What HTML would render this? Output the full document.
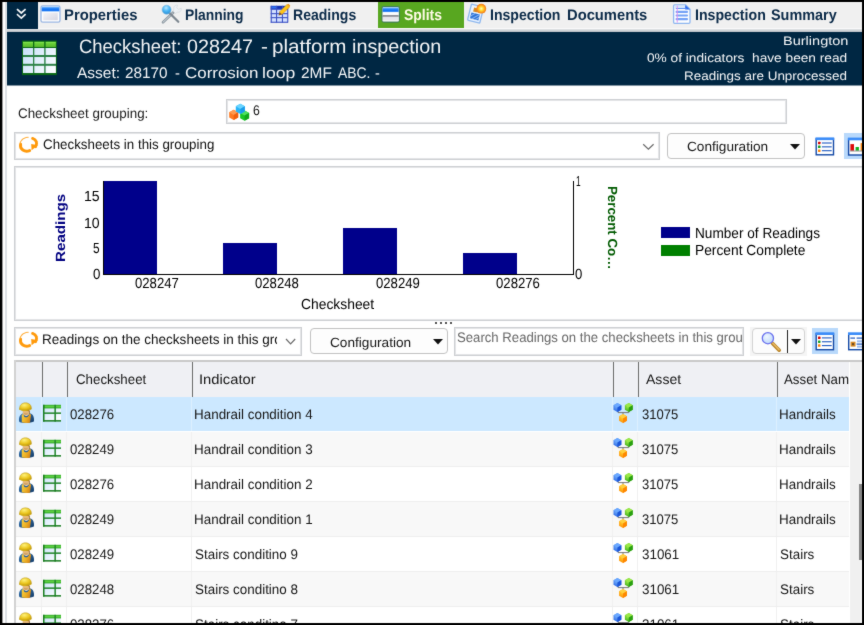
<!DOCTYPE html>
<html lang="en">
<head>
<meta charset="utf-8">
<title>Checksheet 028247 - Splits</title>
<style>
html,body{margin:0;padding:0;}
body{width:864px;height:625px;background:#000;overflow:hidden;position:relative;font-family:"Liberation Sans",sans-serif;filter:url(#soft);}
#app{position:absolute;left:2px;top:2px;width:860px;height:621px;background:#fff;overflow:hidden;}
#in{position:absolute;left:-2px;top:-2px;width:864px;height:625px;}
.b{position:absolute;box-sizing:border-box;}
.t{position:absolute;white-space:pre;line-height:1;transform-origin:0 0;text-rendering:geometricPrecision;}
.clip{position:absolute;overflow:hidden;}
.bx{border:1px solid #cdcfd2;box-shadow:inset 0 0 0 1px #e4e5e7;background:#fff;}
svg{position:absolute;overflow:visible;}
</style>
</head>
<body>
<div id="app"><div id="in">
<svg width="0" height="0" style="left:0;top:0"><defs>
<filter id="soft" x="0" y="0" width="100%" height="100%" color-interpolation-filters="sRGB"><feConvolveMatrix order="3" kernelMatrix="1 4 1 4 40 4 1 4 1" divisor="60" edgeMode="duplicate" preserveAlpha="true"/></filter>
<linearGradient id="gTitle" x1="0" y1="0" x2="0" y2="1"><stop offset="0" stop-color="#8cc6ff"/><stop offset="0.35" stop-color="#2a86f8"/><stop offset="0.75" stop-color="#0a6cf2"/><stop offset="1" stop-color="#7db6fb"/></linearGradient>
<linearGradient id="gPane" x1="0" y1="0" x2="1" y2="1"><stop offset="0" stop-color="#f4f4f8"/><stop offset="1" stop-color="#d6d6e2"/></linearGradient>
<linearGradient id="gCell" x1="0" y1="0" x2="1" y2="1"><stop offset="0" stop-color="#cbe2fa"/><stop offset="1" stop-color="#ffffff"/></linearGradient>
<linearGradient id="gCellBig" gradientUnits="userSpaceOnUse" x1="23" y1="48" x2="56" y2="73"><stop offset="0" stop-color="#c6dff8"/><stop offset="1" stop-color="#ffffff"/></linearGradient>
<linearGradient id="gGreenTop" x1="0" y1="0" x2="0" y2="1"><stop offset="0" stop-color="#8cf05a"/><stop offset="0.3" stop-color="#6ad038"/><stop offset="1" stop-color="#58b82c"/></linearGradient>
<radialGradient id="gBall" cx="0.45" cy="0.3" r="0.7"><stop offset="0" stop-color="#b8e8ff"/><stop offset="0.5" stop-color="#4db8f6"/><stop offset="1" stop-color="#2a8fd6"/></radialGradient>
<radialGradient id="gSun" cx="0.5" cy="0.5" r="0.5"><stop offset="0" stop-color="#fffbd0"/><stop offset="0.35" stop-color="#ffe23a"/><stop offset="0.75" stop-color="#ff9a18"/><stop offset="1" stop-color="#f07818"/></radialGradient>
<linearGradient id="gPencil" x1="0" y1="0" x2="1" y2="1"><stop offset="0" stop-color="#ffe02a"/><stop offset="0.6" stop-color="#ffc010"/><stop offset="1" stop-color="#e88a08"/></linearGradient>
<radialGradient id="gBlueC" cx="0.4" cy="0.35" r="0.7"><stop offset="0" stop-color="#7ab4ff"/><stop offset="1" stop-color="#1e5ee0"/></radialGradient>
<radialGradient id="gGreenC" cx="0.4" cy="0.35" r="0.7"><stop offset="0" stop-color="#a8f050"/><stop offset="1" stop-color="#30a810"/></radialGradient>
<radialGradient id="gOrangeC" cx="0.4" cy="0.35" r="0.7"><stop offset="0" stop-color="#ffd030"/><stop offset="1" stop-color="#ff8a00"/></radialGradient>
<radialGradient id="gHat" cx="0.4" cy="0.3" r="0.8"><stop offset="0" stop-color="#fff27a"/><stop offset="0.6" stop-color="#e8c21a"/><stop offset="1" stop-color="#b89010"/></radialGradient>
<linearGradient id="gShirt" x1="0" y1="0" x2="1" y2="1"><stop offset="0" stop-color="#3a7ab8"/><stop offset="1" stop-color="#123a66"/></linearGradient>
<linearGradient id="gApron" x1="0" y1="0" x2="1" y2="0.4"><stop offset="0" stop-color="#f8d040"/><stop offset="0.55" stop-color="#eeb428"/><stop offset="1" stop-color="#d88a18"/></linearGradient>
<radialGradient id="gLens" cx="0.4" cy="0.35" r="0.7"><stop offset="0" stop-color="#eef6ff"/><stop offset="1" stop-color="#bcd8fb"/></radialGradient>
</defs></svg>
<!-- left window edge -->
<div class="b" style="left:2px;top:2px;width:1px;height:621px;background:#9a9a9a"></div>
<div class="b" style="left:5px;top:2px;width:2px;height:621px;background:#dde0e4"></div>

<!-- tab bar -->
<div class="b" style="left:7px;top:2px;width:855px;height:27px;background:#f0f0f0"></div>
<div class="b" style="left:7px;top:28px;width:855px;height:1px;background:#fafafa"></div>
<div class="b" style="left:7px;top:29px;width:855px;height:3px;background:linear-gradient(#e4e6e8,#b9bec4)"></div>
<div class="b" style="left:7px;top:2px;width:31px;height:27px;background:#002743"></div>
<div class="b" style="left:378px;top:2px;width:86px;height:26px;background:#58a720"></div>
<svg style="left:14px;top:6px" width="18" height="18" viewBox="14 6 18 18" ><path d="M17.6 9.6 L21.3 13.0 L25.0 9.6 M17.6 14.8 L21.3 18.2 L25.0 14.8" fill="none" stroke="#f4f6f8" stroke-width="1.7" stroke-linecap="square"/></svg>
<svg style="left:39px;top:3px" width="24" height="22" viewBox="39 3 24 22" ><rect x="41.0" y="5.8999999999999995" width="19.0" height="16.3" rx="1.8" fill="#fff" stroke="#9ab6e2" stroke-width="1.3"/><rect x="41.699999999999996" y="6.699999999999999" width="17.599999999999998" height="4.9" fill="url(#gTitle)"/><rect x="43.199999999999996" y="12.7" width="14.6" height="7.5" fill="url(#gPane)"/></svg>
<svg style="left:159px;top:3px" width="24" height="22" viewBox="159 3 24 22" ><path d="M163 22.3 L173.5 12.2" stroke="#8f9aa3" stroke-width="2.6" stroke-linecap="round" fill="none"/><path d="M163.2 22.1 L172.5 13.2" stroke="#d6dde2" stroke-width="0.9" stroke-linecap="round" fill="none"/><path d="M168.2 11.8 L178.3 21.8" stroke="#7d8790" stroke-width="2.2" stroke-linecap="round" fill="none"/><path d="M173.8 9.2 C173.2 6.2 175.5 4.6 177.6 5.2 L176.6 7.8 L178.6 9.4 L181.2 8.2 C181.8 10.8 179.8 12.8 177.2 12.2 L175.6 13.4 L173 11.2 Z" fill="#eef1f4" stroke="#cfd5da" stroke-width="0.6"/><circle cx="166.6" cy="9.7" r="4.5" fill="url(#gBall)" stroke="#7fb6dc" stroke-width="0.6"/></svg>
<svg style="left:268px;top:2px" width="24" height="24" viewBox="268 2 24 24" ><rect x="270.7" y="5.8" width="17.3" height="16.8" fill="#d3e0ff"/><rect x="270.7" y="5.8" width="17.3" height="3.4" fill="#1432b4"/><rect x="271.2" y="6.4" width="6" height="2.2" fill="#2f74f2"/><rect x="270.7" y="5.8" width="1.1" height="16.8" fill="#3c52c4"/><rect x="276.0" y="5.8" width="1.1" height="16.8" fill="#3c52c4"/><rect x="281.9" y="5.8" width="1.1" height="16.8" fill="#3c52c4"/><rect x="287.2" y="5.8" width="1.1" height="16.8" fill="#3c52c4"/><rect x="270.7" y="8.7" width="17.3" height="1.1" fill="#3c52c4"/><rect x="270.7" y="13.1" width="17.3" height="1.1" fill="#3c52c4"/><rect x="270.7" y="17.1" width="17.3" height="1.1" fill="#3c52c4"/><rect x="270.7" y="21.7" width="17.3" height="1.1" fill="#3c52c4"/><path d="M287.0 4.4 L289.6 7.0 L282.0 14.6 L279.4 12.0 Z" fill="url(#gPencil)" stroke="#c98a18" stroke-width="0.5"/><path d="M279.4 12.0 L282.0 14.6 L278.6 15.4 Z" fill="#8a5a20"/><path d="M287.0 4.4 L289.6 7.0 L290.2 5.6 L288.4 3.8 Z" fill="#f09818"/></svg>
<svg style="left:380px;top:4px" width="22" height="21" viewBox="380 4 22 21" ><rect x="382.0" y="6.6" width="17.3" height="15.400000000000002" rx="1.8" fill="#fff" stroke="#3f7d55" stroke-width="1.3"/><rect x="382.7" y="7.4" width="15.9" height="4.9" fill="url(#gTitle)"/><rect x="382.7" y="12.3" width="15.9" height="3.0" fill="#fbfbfd"/><rect x="382.7" y="15.0" width="15.9" height="1.9" fill="#8e8e98"/><rect x="382.7" y="16.9" width="15.9" height="4.300000000000001" fill="#e4e4ec"/><rect x="382.7" y="20.3" width="15.9" height="1" fill="#fafafc"/></svg>
<svg style="left:465px;top:2px" width="24" height="24" viewBox="465 2 24 24" ><g transform="rotate(14 475 14)"><rect x="469.2" y="5.2" width="12.6" height="16.6" rx="1" fill="#eaf3ff" stroke="#8fb8ee" stroke-width="1.3"/><rect x="471.2" y="13.4" width="8.6" height="6.0" fill="#2f74d8"/><path d="M471.2 17 L475 13.4 M473.2 19.4 L479.4 13.6 M476.6 19.4 L479.8 16.4" stroke="#8fb8f2" stroke-width="1"/><rect x="472.6" y="8.0" width="4.6" height="4.0" fill="#d98a20"/></g><circle cx="481.3" cy="8.7" r="4.9" fill="url(#gSun)"/></svg>
<svg style="left:671px;top:3px" width="22" height="22" viewBox="671 3 22 22" ><path d="M674.6 4.9 H685.6 L690 9.2 V22.2 Q690 23.3 688.9 23.3 H674.6 Q673.6 23.3 673.6 22.2 V5.9 Q673.6 4.9 674.6 4.9 Z" fill="#fdfeff" stroke="#8db6f0" stroke-width="1.3"/><rect x="674.6" y="5.6" width="11" height="2.6" fill="#d6e8fc"/><path d="M685.2 4.9 L690 9.4 H685.2 Z" fill="#2a68f0"/><rect x="675.8" y="8.1" width="11" height="0.9" fill="#4f86f2"/><rect x="675.6" y="10.8" width="12.4" height="2.1" rx="0.9" fill="#74a2f6"/><rect x="675.6" y="14.4" width="12.4" height="2.1" rx="0.9" fill="#74a2f6"/><rect x="675.6" y="18.1" width="12.4" height="2.1" rx="0.9" fill="#74a2f6"/><rect x="676.7" y="5.6" width="1.1" height="17" fill="#e58cf0" opacity="0.85"/></svg>

<!-- header band -->
<div class="b" style="left:7px;top:32px;width:855px;height:53px;background:#002743"></div>
<div class="b" style="left:7px;top:85px;width:855px;height:1px;background:#7f92a0"></div>
<svg style="left:21px;top:40px" width="37" height="36" viewBox="21 40 37 36" ><rect x="22" y="40.6" width="34.8" height="34.5" fill="#0b6a14"/><rect x="23.0" y="41.8" width="10.0" height="5.2" fill="url(#gGreenTop)"/><rect x="34.3" y="41.8" width="9.900000000000006" height="5.2" fill="url(#gGreenTop)"/><rect x="45.6" y="41.8" width="10.299999999999997" height="5.2" fill="url(#gGreenTop)"/><rect x="23" y="48" width="33" height="25.2" fill="#2c8246"/><rect x="23.0" y="48.0" width="10.0" height="7.0" fill="url(#gCellBig)"/><rect x="23.0" y="57.0" width="10.0" height="6.799999999999997" fill="url(#gCellBig)"/><rect x="23.0" y="65.8" width="10.0" height="7.200000000000003" fill="url(#gCellBig)"/><rect x="34.3" y="48.0" width="9.900000000000006" height="7.0" fill="url(#gCellBig)"/><rect x="34.3" y="57.0" width="9.900000000000006" height="6.799999999999997" fill="url(#gCellBig)"/><rect x="34.3" y="65.8" width="9.900000000000006" height="7.200000000000003" fill="url(#gCellBig)"/><rect x="45.6" y="48.0" width="10.299999999999997" height="7.0" fill="url(#gCellBig)"/><rect x="45.6" y="57.0" width="10.299999999999997" height="6.799999999999997" fill="url(#gCellBig)"/><rect x="45.6" y="65.8" width="10.299999999999997" height="7.200000000000003" fill="url(#gCellBig)"/></svg>

<!-- grouping row -->
<div class="b bx" style="left:226px;top:99px;width:561px;height:25px"></div>
<svg style="left:227px;top:102px" width="25" height="21" viewBox="227 102 25 21" ><path d="M233.70 109.70 L238.20 112.30 L238.20 117.50 L233.70 120.10 L229.20 117.50 L229.20 112.30 Z" fill="#ff7a22"/><path d="M233.70 109.70 L238.20 112.30 L233.70 114.90 L229.20 112.30 Z" fill="#ff9a50"/><path d="M238.20 112.30 L238.20 117.50 L233.70 120.10 L233.70 114.90 Z" fill="#f0600e"/><path d="M244.60 110.40 L249.10 113.00 L249.10 118.20 L244.60 120.80 L240.10 118.20 L240.10 113.00 Z" fill="#18c828"/><path d="M244.60 110.40 L249.10 113.00 L244.60 115.60 L240.10 113.00 Z" fill="#4ee060"/><path d="M249.10 113.00 L249.10 118.20 L244.60 120.80 L244.60 115.60 Z" fill="#10a81c"/><path d="M240.30 103.70 L244.80 106.30 L244.80 111.50 L240.30 114.10 L235.80 111.50 L235.80 106.30 Z" fill="#28b4f8"/><path d="M240.30 103.70 L244.80 106.30 L240.30 108.90 L235.80 106.30 Z" fill="#6ad4ff"/><path d="M244.80 106.30 L244.80 111.50 L240.30 114.10 L240.30 108.90 Z" fill="#1a9cea"/></svg>

<!-- toolbar 1 -->
<div class="b bx" style="left:14px;top:132px;width:646px;height:28px"></div>
<svg style="left:17px;top:135px" width="23" height="20" viewBox="17 135 23 20" ><g transform="translate(0 0)"><path d="M20.6 144.2 C19.6 149.2 24.6 152.6 29.6 150.6" fill="none" stroke="#ff9a0c" stroke-width="2.9" stroke-linecap="round"/><path d="M20.2 143.0 C21.0 139.6 24.4 137.2 28.8 137.2" fill="none" stroke="#ffb040" stroke-width="1.1" stroke-linecap="round" stroke-dasharray="2.2 0.6"/><path d="M32.6 138.4 C36.6 139.6 37.6 143.6 35.6 146.6" fill="none" stroke="#ff9a0c" stroke-width="2.9" stroke-linecap="round"/><path d="M31.2 144.0 L38.0 145.2 L31.6 150.2 Z" fill="#ff9a0c"/></g></svg>
<svg style="left:642px;top:143px" width="13" height="8" viewBox="0 0 13 8"><path d="M1.2 1.2 L6.4 6.2 L11.6 1.2" fill="none" stroke="#6a6a6a" stroke-width="1.2"/></svg>
<div class="b" style="left:667px;top:133px;width:138px;height:26px;border:1px solid #c2c2c2;border-radius:4px;background:#fdfdfd"></div>
<svg style="left:790px;top:144px" width="10" height="6" viewBox="0 0 10 6"><path d="M0 0 H10 L5 5.5 Z" fill="#111"/></svg>
<div class="b" style="left:844px;top:133px;width:18px;height:26px;background:#b9d9fb"></div>
<svg style="left:815px;top:137px" width="20" height="19" viewBox="815 137 20 19" ><rect x="816.2" y="138.8" width="17.3" height="16.0" fill="#fff" stroke="#1349a6" stroke-width="1.4"/><rect x="815.5" y="137.4" width="18.7" height="2.7" fill="#3b8cf8"/><rect x="818.0" y="141.70000000000002" width="2.5" height="2.5" rx="0.6" fill="#d40000"/><rect x="821.9" y="142.45000000000002" width="9.8" height="1.1" fill="#1c58c0"/><rect x="818.0" y="145.55" width="2.5" height="2.5" rx="0.6" fill="#12a022"/><rect x="821.9" y="146.3" width="9.8" height="1.1" fill="#1c58c0"/><rect x="818.0" y="149.4" width="2.5" height="2.5" rx="0.6" fill="#ff8200"/><rect x="821.9" y="150.15" width="9.8" height="1.1" fill="#1c58c0"/></svg>
<svg style="left:847px;top:137px" width="15" height="19" viewBox="847 137 15 19"><rect x="848.6" y="139.0" width="17.3" height="16.0" fill="#fff" stroke="#1349a6" stroke-width="1.4"/><rect x="847.9" y="137.6" width="18.7" height="2.7" fill="#3b8cf8"/><rect x="850.4" y="144.1" width="3.6" height="6.6" fill="#dc0a0a"/><rect x="855.6" y="147.0" width="3.3" height="3.7" fill="#12b022"/><rect x="860.6" y="143.1" width="3.4" height="7.6" fill="#ff8a10"/><rect x="850.1" y="150.6" width="14" height="0.8" fill="#777"/></svg>

<!-- chart panel -->
<div class="b bx" style="left:14px;top:166px;width:860px;height:155px"></div>
<div class="b" style="left:103px;top:181px;width:54px;height:93px;background:#00008b"></div>
<div class="b" style="left:223px;top:243px;width:54px;height:31px;background:#00008b"></div>
<div class="b" style="left:343px;top:228px;width:54px;height:46px;background:#00008b"></div>
<div class="b" style="left:463px;top:253px;width:54px;height:21px;background:#00008b"></div>
<div class="b" style="left:103px;top:274px;width:471px;height:1px;background:#000"></div>
<div class="b" style="left:103px;top:181px;width:1px;height:94px;background:#000"></div>
<div class="b" style="left:573px;top:181px;width:1px;height:94px;background:#000"></div>
<div class="b" style="left:661px;top:227px;width:29px;height:11px;background:#00008b"></div>
<div class="b" style="left:661px;top:245px;width:29px;height:11px;background:#008000"></div>
<div class="t" style="left:54.2px;top:261.6px;font-size:13.3px;font-weight:700;color:#000080;transform:rotate(-90deg) scaleX(1.14);transform-origin:0 0;">Readings</div>
<div class="t" style="left:619px;top:185.6px;font-size:13.3px;font-weight:700;color:#005a00;transform:rotate(90deg) scaleX(1.0);transform-origin:0 0;">Percent Co…</div>

<!-- splitter dots -->
<div class="b" style="left:434.5px;top:322px;width:2px;height:2px;background:#555"></div>
<div class="b" style="left:439.5px;top:322px;width:2px;height:2px;background:#555"></div>
<div class="b" style="left:444.5px;top:322px;width:2px;height:2px;background:#555"></div>
<div class="b" style="left:449.5px;top:322px;width:2px;height:2px;background:#555"></div>

<!-- toolbar 2 -->
<div class="b bx" style="left:14px;top:327px;width:288px;height:29px"></div>
<svg style="left:17px;top:330px" width="23" height="20" viewBox="17 330 23 20"><g transform="translate(0 195)"><path d="M20.6 144.2 C19.6 149.2 24.6 152.6 29.6 150.6" fill="none" stroke="#ff9a0c" stroke-width="2.9" stroke-linecap="round"/><path d="M20.2 143.0 C21.0 139.6 24.4 137.2 28.8 137.2" fill="none" stroke="#ffb040" stroke-width="1.1" stroke-linecap="round" stroke-dasharray="2.2 0.6"/><path d="M32.6 138.4 C36.6 139.6 37.6 143.6 35.6 146.6" fill="none" stroke="#ff9a0c" stroke-width="2.9" stroke-linecap="round"/><path d="M31.2 144.0 L38.0 145.2 L31.6 150.2 Z" fill="#ff9a0c"/></g></svg>
<svg style="left:285px;top:338px" width="12" height="8" viewBox="0 0 12 8"><path d="M1 1 L5.6 5.8 L10.2 1" fill="none" stroke="#6a6a6a" stroke-width="1.2"/></svg>
<div class="b" style="left:310px;top:328px;width:138px;height:26px;border:1px solid #c2c2c2;border-radius:4px;background:#fdfdfd"></div>
<svg style="left:432.5px;top:339px" width="10" height="6" viewBox="0 0 10 6"><path d="M0 0 H10 L5 5.5 Z" fill="#111"/></svg>
<div class="b bx" style="left:454px;top:327px;width:290px;height:29px"></div>
<div class="b" style="left:750px;top:327px;width:57px;height:29px;background:#f5f5f5"></div>
<div class="b" style="left:752px;top:328px;width:53px;height:26px;border:1px solid #d2d2d2;border-radius:4px;background:#fcfcfc"></div>
<div class="b" style="left:786.5px;top:330px;width:1px;height:23px;background:#222"></div>
<svg style="left:791px;top:339px" width="10" height="6" viewBox="0 0 10 6"><path d="M0 0 H10 L5 5.5 Z" fill="#111"/></svg>
<div class="b" style="left:812px;top:328px;width:26px;height:26px;background:#b9d9fb"></div>
<svg style="left:760px;top:331px" width="22" height="22" viewBox="760 331 22 22" ><path d="M772.6 343.4 L779.2 350.2" stroke="#b8842a" stroke-width="3.6" stroke-linecap="round"/><path d="M772.8 343.2 L779.0 349.6" stroke="#e8b860" stroke-width="1.6" stroke-linecap="round"/><circle cx="767.9" cy="338.2" r="5.6" fill="url(#gLens)" stroke="#6a70ee" stroke-width="1.3"/></svg>
<svg style="left:815px;top:332px" width="20" height="19" viewBox="815 332 20 19" ><rect x="816.2" y="333.7" width="17.3" height="16.0" fill="#fff" stroke="#1349a6" stroke-width="1.4"/><rect x="815.5" y="332.3" width="18.7" height="2.7" fill="#3b8cf8"/><rect x="818.0" y="336.6" width="2.5" height="2.5" rx="0.6" fill="#d40000"/><rect x="821.9" y="337.35" width="9.8" height="1.1" fill="#1c58c0"/><rect x="818.0" y="340.45000000000005" width="2.5" height="2.5" rx="0.6" fill="#12a022"/><rect x="821.9" y="341.20000000000005" width="9.8" height="1.1" fill="#1c58c0"/><rect x="818.0" y="344.3" width="2.5" height="2.5" rx="0.6" fill="#ff8200"/><rect x="821.9" y="345.05" width="9.8" height="1.1" fill="#1c58c0"/></svg>
<svg style="left:847px;top:332px" width="15" height="19" viewBox="847 332 15 19"><rect x="848.7" y="333.7" width="17.3" height="16.0" fill="#fff" stroke="#1349a6" stroke-width="1.4"/><rect x="848" y="332.3" width="18.7" height="2.7" fill="#3b8cf8"/><rect x="850.4" y="337.5" width="4.6" height="1.2" fill="#1c58c0"/><rect x="856.6" y="337.5" width="8" height="1.2" fill="#1c58c0"/><rect x="850.6" y="341.7" width="4.9" height="4.9" fill="#d98a20"/><rect x="852" y="343.1" width="2.1" height="2.1" fill="#6a4a2a"/><rect x="857" y="340.3" width="5" height="2" fill="#9dbcf0"/><rect x="856.6" y="343.5" width="8" height="1.2" fill="#1c58c0"/><rect x="857" y="345.7" width="6" height="2" fill="#9dbcf0"/></svg>

<!-- grid -->
<div class="b" style="left:14px;top:360px;width:848px;height:263px;background:#fff"></div>
<div class="b" style="left:14px;top:360px;width:848px;height:2px;background:#c9c9c9"></div>
<div class="b" style="left:14px;top:360px;width:2px;height:263px;background:#d2d2d2"></div>
<div class="b" style="left:16px;top:362px;width:833px;height:35px;background:#eff0f4"></div>
<div class="b" style="left:42px;top:362px;width:1px;height:35px;background:#6b6b6b"></div>
<div class="b" style="left:67px;top:362px;width:1px;height:35px;background:#6b6b6b"></div>
<div class="b" style="left:192px;top:362px;width:1px;height:35px;background:#6b6b6b"></div>
<div class="b" style="left:613px;top:362px;width:1px;height:35px;background:#6b6b6b"></div>
<div class="b" style="left:638px;top:362px;width:1px;height:35px;background:#6b6b6b"></div>
<div class="b" style="left:777px;top:362px;width:1px;height:35px;background:#6b6b6b"></div>
<div class="b" style="left:16px;top:397px;width:833px;height:34px;background:#cce8ff"></div>
<div class="b" style="left:41px;top:397px;width:1px;height:34px;background:#dcefff"></div>
<div class="b" style="left:66px;top:397px;width:1px;height:34px;background:#dcefff"></div>
<div class="b" style="left:191px;top:397px;width:1px;height:34px;background:#dcefff"></div>
<div class="b" style="left:612px;top:397px;width:1px;height:34px;background:#dcefff"></div>
<div class="b" style="left:637px;top:397px;width:1px;height:34px;background:#dcefff"></div>
<div class="b" style="left:776px;top:397px;width:1px;height:34px;background:#dcefff"></div>
<svg style="left:17px;top:402px" width="19" height="22" viewBox="17 402 19 22"><g transform="translate(0 0)"><path d="M19.0 420.4 C18.6 416.2 20.8 413.8 23.6 413.2 L30.0 413.2 C33.0 414.0 34.4 417.0 33.9 421.6 C31 423.3 23 423.5 19.4 421.9 Z" fill="url(#gShirt)"/><path d="M21.7 415.0 L23.5 413.6 L24.0 416.4 C25.4 417.8 27.6 417.6 28.6 415.8 L29.5 413.5 L31.1 414.7 L29.9 422.7 C27 423.4 24 423.2 21.8 422.3 Z" fill="url(#gApron)"/><path d="M24.0 414.0 C25 416.6 27.8 416.6 28.8 413.8 L27.6 413.2 L25 413.2 Z" fill="#eef2f6"/><ellipse cx="26.0" cy="412.0" rx="3.4" ry="3.5" fill="#e6b878"/><path d="M28.4 409.6 C30.2 410.4 30.2 413.2 29.0 414.6 C29.4 412.8 29.0 411.2 28.0 410.2 Z" fill="#8a5a22"/><path d="M22.6 410.2 C23.6 411.4 28.4 411.4 29.6 410.0 L29.6 409 L22.6 409 Z" fill="#9a6a2a"/><path d="M24.4 413.6 C25.2 414.2 26.6 414.2 27.4 413.6" stroke="#a8703a" stroke-width="0.6" fill="none"/><path d="M19.6 409.4 C19.2 405.0 22.0 402.8 25.4 402.8 C29.0 402.8 31.6 405.0 31.4 408.8 C28.4 410.8 22.8 411.0 19.6 409.4 Z" fill="url(#gHat)" stroke="#a8860e" stroke-width="0.4"/><path d="M19.0 409.2 C21.6 411.4 27.4 411.6 31.4 409.6 L31.6 408.4 C27.6 410.2 22.2 410.0 19.2 408.2 Z" fill="#d4b018"/></g></svg><svg style="left:42px;top:404px" width="20" height="19" viewBox="42 404 20 19"><g transform="translate(0 0)"><rect x="43.6" y="405.4" width="17.4" height="15.6" fill="url(#gCell)"/><rect x="43" y="404.8" width="18" height="3.6" fill="#2fa82a"/><rect x="44.4" y="405.6" width="16.6" height="1.8" fill="#5ed040"/><rect x="43" y="404.8" width="1.5" height="16.8" fill="#187c1e"/><rect x="54.4" y="404.8" width="1.5" height="16.8" fill="#1f8428"/><rect x="43" y="412.4" width="18" height="1.5" fill="#1f8428"/><rect x="43" y="420.1" width="18" height="1.5" fill="#187c1e"/></g></svg><svg style="left:612px;top:402px" width="23" height="22" viewBox="612 402 23 22"><g transform="translate(0 0)"><path d="M618 411 V412.6 H628.8 V411 M623 412.6 V415" fill="none" stroke="#6a6a6a" stroke-width="0.9"/><path d="M617.40 402.90 L621.30 405.15 L621.30 409.65 L617.40 411.90 L613.50 409.65 L613.50 405.15 Z" fill="url(#gBlueC)"/><path d="M617.40 402.90 L621.30 405.15 L617.40 407.40 L613.50 405.15 Z" fill="#6aa8ff"/><path d="M621.30 405.15 L621.30 409.65 L617.40 411.90 L617.40 407.40 Z" fill="#1a56d8"/><path d="M628.80 402.90 L632.70 405.15 L632.70 409.65 L628.80 411.90 L624.90 409.65 L624.90 405.15 Z" fill="url(#gGreenC)"/><path d="M628.80 402.90 L632.70 405.15 L628.80 407.40 L624.90 405.15 Z" fill="#9ae848"/><path d="M632.70 405.15 L632.70 409.65 L628.80 411.90 L628.80 407.40 Z" fill="#2aa010"/><path d="M623.00 413.90 L626.90 416.15 L626.90 420.65 L623.00 422.90 L619.10 420.65 L619.10 416.15 Z" fill="url(#gOrangeC)"/><path d="M623.00 413.90 L626.90 416.15 L623.00 418.40 L619.10 416.15 Z" fill="#ffd040"/><path d="M626.90 416.15 L626.90 420.65 L623.00 422.90 L623.00 418.40 Z" fill="#ff8800"/></g></svg>
<div class="b" style="left:16px;top:432px;width:833px;height:34px;background:#f8f8f8"></div>
<div class="b" style="left:16px;top:466px;width:833px;height:1px;background:#eeeeee"></div>
<div class="b" style="left:41px;top:432px;width:1px;height:34px;background:#f0f0f0"></div>
<div class="b" style="left:66px;top:432px;width:1px;height:34px;background:#f0f0f0"></div>
<div class="b" style="left:191px;top:432px;width:1px;height:34px;background:#f0f0f0"></div>
<div class="b" style="left:612px;top:432px;width:1px;height:34px;background:#f0f0f0"></div>
<div class="b" style="left:637px;top:432px;width:1px;height:34px;background:#f0f0f0"></div>
<div class="b" style="left:776px;top:432px;width:1px;height:34px;background:#f0f0f0"></div>
<svg style="left:17px;top:437px" width="19" height="22" viewBox="17 437 19 22"><g transform="translate(0 35)"><path d="M19.0 420.4 C18.6 416.2 20.8 413.8 23.6 413.2 L30.0 413.2 C33.0 414.0 34.4 417.0 33.9 421.6 C31 423.3 23 423.5 19.4 421.9 Z" fill="url(#gShirt)"/><path d="M21.7 415.0 L23.5 413.6 L24.0 416.4 C25.4 417.8 27.6 417.6 28.6 415.8 L29.5 413.5 L31.1 414.7 L29.9 422.7 C27 423.4 24 423.2 21.8 422.3 Z" fill="url(#gApron)"/><path d="M24.0 414.0 C25 416.6 27.8 416.6 28.8 413.8 L27.6 413.2 L25 413.2 Z" fill="#eef2f6"/><ellipse cx="26.0" cy="412.0" rx="3.4" ry="3.5" fill="#e6b878"/><path d="M28.4 409.6 C30.2 410.4 30.2 413.2 29.0 414.6 C29.4 412.8 29.0 411.2 28.0 410.2 Z" fill="#8a5a22"/><path d="M22.6 410.2 C23.6 411.4 28.4 411.4 29.6 410.0 L29.6 409 L22.6 409 Z" fill="#9a6a2a"/><path d="M24.4 413.6 C25.2 414.2 26.6 414.2 27.4 413.6" stroke="#a8703a" stroke-width="0.6" fill="none"/><path d="M19.6 409.4 C19.2 405.0 22.0 402.8 25.4 402.8 C29.0 402.8 31.6 405.0 31.4 408.8 C28.4 410.8 22.8 411.0 19.6 409.4 Z" fill="url(#gHat)" stroke="#a8860e" stroke-width="0.4"/><path d="M19.0 409.2 C21.6 411.4 27.4 411.6 31.4 409.6 L31.6 408.4 C27.6 410.2 22.2 410.0 19.2 408.2 Z" fill="#d4b018"/></g></svg><svg style="left:42px;top:439px" width="20" height="19" viewBox="42 439 20 19"><g transform="translate(0 35)"><rect x="43.6" y="405.4" width="17.4" height="15.6" fill="url(#gCell)"/><rect x="43" y="404.8" width="18" height="3.6" fill="#2fa82a"/><rect x="44.4" y="405.6" width="16.6" height="1.8" fill="#5ed040"/><rect x="43" y="404.8" width="1.5" height="16.8" fill="#187c1e"/><rect x="54.4" y="404.8" width="1.5" height="16.8" fill="#1f8428"/><rect x="43" y="412.4" width="18" height="1.5" fill="#1f8428"/><rect x="43" y="420.1" width="18" height="1.5" fill="#187c1e"/></g></svg><svg style="left:612px;top:437px" width="23" height="22" viewBox="612 437 23 22"><g transform="translate(0 35)"><path d="M618 411 V412.6 H628.8 V411 M623 412.6 V415" fill="none" stroke="#6a6a6a" stroke-width="0.9"/><path d="M617.40 402.90 L621.30 405.15 L621.30 409.65 L617.40 411.90 L613.50 409.65 L613.50 405.15 Z" fill="url(#gBlueC)"/><path d="M617.40 402.90 L621.30 405.15 L617.40 407.40 L613.50 405.15 Z" fill="#6aa8ff"/><path d="M621.30 405.15 L621.30 409.65 L617.40 411.90 L617.40 407.40 Z" fill="#1a56d8"/><path d="M628.80 402.90 L632.70 405.15 L632.70 409.65 L628.80 411.90 L624.90 409.65 L624.90 405.15 Z" fill="url(#gGreenC)"/><path d="M628.80 402.90 L632.70 405.15 L628.80 407.40 L624.90 405.15 Z" fill="#9ae848"/><path d="M632.70 405.15 L632.70 409.65 L628.80 411.90 L628.80 407.40 Z" fill="#2aa010"/><path d="M623.00 413.90 L626.90 416.15 L626.90 420.65 L623.00 422.90 L619.10 420.65 L619.10 416.15 Z" fill="url(#gOrangeC)"/><path d="M623.00 413.90 L626.90 416.15 L623.00 418.40 L619.10 416.15 Z" fill="#ffd040"/><path d="M626.90 416.15 L626.90 420.65 L623.00 422.90 L623.00 418.40 Z" fill="#ff8800"/></g></svg>
<div class="b" style="left:16px;top:467px;width:833px;height:34px;background:#ffffff"></div>
<div class="b" style="left:16px;top:501px;width:833px;height:1px;background:#eeeeee"></div>
<div class="b" style="left:41px;top:467px;width:1px;height:34px;background:#f0f0f0"></div>
<div class="b" style="left:66px;top:467px;width:1px;height:34px;background:#f0f0f0"></div>
<div class="b" style="left:191px;top:467px;width:1px;height:34px;background:#f0f0f0"></div>
<div class="b" style="left:612px;top:467px;width:1px;height:34px;background:#f0f0f0"></div>
<div class="b" style="left:637px;top:467px;width:1px;height:34px;background:#f0f0f0"></div>
<div class="b" style="left:776px;top:467px;width:1px;height:34px;background:#f0f0f0"></div>
<svg style="left:17px;top:472px" width="19" height="22" viewBox="17 472 19 22"><g transform="translate(0 70)"><path d="M19.0 420.4 C18.6 416.2 20.8 413.8 23.6 413.2 L30.0 413.2 C33.0 414.0 34.4 417.0 33.9 421.6 C31 423.3 23 423.5 19.4 421.9 Z" fill="url(#gShirt)"/><path d="M21.7 415.0 L23.5 413.6 L24.0 416.4 C25.4 417.8 27.6 417.6 28.6 415.8 L29.5 413.5 L31.1 414.7 L29.9 422.7 C27 423.4 24 423.2 21.8 422.3 Z" fill="url(#gApron)"/><path d="M24.0 414.0 C25 416.6 27.8 416.6 28.8 413.8 L27.6 413.2 L25 413.2 Z" fill="#eef2f6"/><ellipse cx="26.0" cy="412.0" rx="3.4" ry="3.5" fill="#e6b878"/><path d="M28.4 409.6 C30.2 410.4 30.2 413.2 29.0 414.6 C29.4 412.8 29.0 411.2 28.0 410.2 Z" fill="#8a5a22"/><path d="M22.6 410.2 C23.6 411.4 28.4 411.4 29.6 410.0 L29.6 409 L22.6 409 Z" fill="#9a6a2a"/><path d="M24.4 413.6 C25.2 414.2 26.6 414.2 27.4 413.6" stroke="#a8703a" stroke-width="0.6" fill="none"/><path d="M19.6 409.4 C19.2 405.0 22.0 402.8 25.4 402.8 C29.0 402.8 31.6 405.0 31.4 408.8 C28.4 410.8 22.8 411.0 19.6 409.4 Z" fill="url(#gHat)" stroke="#a8860e" stroke-width="0.4"/><path d="M19.0 409.2 C21.6 411.4 27.4 411.6 31.4 409.6 L31.6 408.4 C27.6 410.2 22.2 410.0 19.2 408.2 Z" fill="#d4b018"/></g></svg><svg style="left:42px;top:474px" width="20" height="19" viewBox="42 474 20 19"><g transform="translate(0 70)"><rect x="43.6" y="405.4" width="17.4" height="15.6" fill="url(#gCell)"/><rect x="43" y="404.8" width="18" height="3.6" fill="#2fa82a"/><rect x="44.4" y="405.6" width="16.6" height="1.8" fill="#5ed040"/><rect x="43" y="404.8" width="1.5" height="16.8" fill="#187c1e"/><rect x="54.4" y="404.8" width="1.5" height="16.8" fill="#1f8428"/><rect x="43" y="412.4" width="18" height="1.5" fill="#1f8428"/><rect x="43" y="420.1" width="18" height="1.5" fill="#187c1e"/></g></svg><svg style="left:612px;top:472px" width="23" height="22" viewBox="612 472 23 22"><g transform="translate(0 70)"><path d="M618 411 V412.6 H628.8 V411 M623 412.6 V415" fill="none" stroke="#6a6a6a" stroke-width="0.9"/><path d="M617.40 402.90 L621.30 405.15 L621.30 409.65 L617.40 411.90 L613.50 409.65 L613.50 405.15 Z" fill="url(#gBlueC)"/><path d="M617.40 402.90 L621.30 405.15 L617.40 407.40 L613.50 405.15 Z" fill="#6aa8ff"/><path d="M621.30 405.15 L621.30 409.65 L617.40 411.90 L617.40 407.40 Z" fill="#1a56d8"/><path d="M628.80 402.90 L632.70 405.15 L632.70 409.65 L628.80 411.90 L624.90 409.65 L624.90 405.15 Z" fill="url(#gGreenC)"/><path d="M628.80 402.90 L632.70 405.15 L628.80 407.40 L624.90 405.15 Z" fill="#9ae848"/><path d="M632.70 405.15 L632.70 409.65 L628.80 411.90 L628.80 407.40 Z" fill="#2aa010"/><path d="M623.00 413.90 L626.90 416.15 L626.90 420.65 L623.00 422.90 L619.10 420.65 L619.10 416.15 Z" fill="url(#gOrangeC)"/><path d="M623.00 413.90 L626.90 416.15 L623.00 418.40 L619.10 416.15 Z" fill="#ffd040"/><path d="M626.90 416.15 L626.90 420.65 L623.00 422.90 L623.00 418.40 Z" fill="#ff8800"/></g></svg>
<div class="b" style="left:16px;top:502px;width:833px;height:34px;background:#f8f8f8"></div>
<div class="b" style="left:16px;top:536px;width:833px;height:1px;background:#eeeeee"></div>
<div class="b" style="left:41px;top:502px;width:1px;height:34px;background:#f0f0f0"></div>
<div class="b" style="left:66px;top:502px;width:1px;height:34px;background:#f0f0f0"></div>
<div class="b" style="left:191px;top:502px;width:1px;height:34px;background:#f0f0f0"></div>
<div class="b" style="left:612px;top:502px;width:1px;height:34px;background:#f0f0f0"></div>
<div class="b" style="left:637px;top:502px;width:1px;height:34px;background:#f0f0f0"></div>
<div class="b" style="left:776px;top:502px;width:1px;height:34px;background:#f0f0f0"></div>
<svg style="left:17px;top:507px" width="19" height="22" viewBox="17 507 19 22"><g transform="translate(0 105)"><path d="M19.0 420.4 C18.6 416.2 20.8 413.8 23.6 413.2 L30.0 413.2 C33.0 414.0 34.4 417.0 33.9 421.6 C31 423.3 23 423.5 19.4 421.9 Z" fill="url(#gShirt)"/><path d="M21.7 415.0 L23.5 413.6 L24.0 416.4 C25.4 417.8 27.6 417.6 28.6 415.8 L29.5 413.5 L31.1 414.7 L29.9 422.7 C27 423.4 24 423.2 21.8 422.3 Z" fill="url(#gApron)"/><path d="M24.0 414.0 C25 416.6 27.8 416.6 28.8 413.8 L27.6 413.2 L25 413.2 Z" fill="#eef2f6"/><ellipse cx="26.0" cy="412.0" rx="3.4" ry="3.5" fill="#e6b878"/><path d="M28.4 409.6 C30.2 410.4 30.2 413.2 29.0 414.6 C29.4 412.8 29.0 411.2 28.0 410.2 Z" fill="#8a5a22"/><path d="M22.6 410.2 C23.6 411.4 28.4 411.4 29.6 410.0 L29.6 409 L22.6 409 Z" fill="#9a6a2a"/><path d="M24.4 413.6 C25.2 414.2 26.6 414.2 27.4 413.6" stroke="#a8703a" stroke-width="0.6" fill="none"/><path d="M19.6 409.4 C19.2 405.0 22.0 402.8 25.4 402.8 C29.0 402.8 31.6 405.0 31.4 408.8 C28.4 410.8 22.8 411.0 19.6 409.4 Z" fill="url(#gHat)" stroke="#a8860e" stroke-width="0.4"/><path d="M19.0 409.2 C21.6 411.4 27.4 411.6 31.4 409.6 L31.6 408.4 C27.6 410.2 22.2 410.0 19.2 408.2 Z" fill="#d4b018"/></g></svg><svg style="left:42px;top:509px" width="20" height="19" viewBox="42 509 20 19"><g transform="translate(0 105)"><rect x="43.6" y="405.4" width="17.4" height="15.6" fill="url(#gCell)"/><rect x="43" y="404.8" width="18" height="3.6" fill="#2fa82a"/><rect x="44.4" y="405.6" width="16.6" height="1.8" fill="#5ed040"/><rect x="43" y="404.8" width="1.5" height="16.8" fill="#187c1e"/><rect x="54.4" y="404.8" width="1.5" height="16.8" fill="#1f8428"/><rect x="43" y="412.4" width="18" height="1.5" fill="#1f8428"/><rect x="43" y="420.1" width="18" height="1.5" fill="#187c1e"/></g></svg><svg style="left:612px;top:507px" width="23" height="22" viewBox="612 507 23 22"><g transform="translate(0 105)"><path d="M618 411 V412.6 H628.8 V411 M623 412.6 V415" fill="none" stroke="#6a6a6a" stroke-width="0.9"/><path d="M617.40 402.90 L621.30 405.15 L621.30 409.65 L617.40 411.90 L613.50 409.65 L613.50 405.15 Z" fill="url(#gBlueC)"/><path d="M617.40 402.90 L621.30 405.15 L617.40 407.40 L613.50 405.15 Z" fill="#6aa8ff"/><path d="M621.30 405.15 L621.30 409.65 L617.40 411.90 L617.40 407.40 Z" fill="#1a56d8"/><path d="M628.80 402.90 L632.70 405.15 L632.70 409.65 L628.80 411.90 L624.90 409.65 L624.90 405.15 Z" fill="url(#gGreenC)"/><path d="M628.80 402.90 L632.70 405.15 L628.80 407.40 L624.90 405.15 Z" fill="#9ae848"/><path d="M632.70 405.15 L632.70 409.65 L628.80 411.90 L628.80 407.40 Z" fill="#2aa010"/><path d="M623.00 413.90 L626.90 416.15 L626.90 420.65 L623.00 422.90 L619.10 420.65 L619.10 416.15 Z" fill="url(#gOrangeC)"/><path d="M623.00 413.90 L626.90 416.15 L623.00 418.40 L619.10 416.15 Z" fill="#ffd040"/><path d="M626.90 416.15 L626.90 420.65 L623.00 422.90 L623.00 418.40 Z" fill="#ff8800"/></g></svg>
<div class="b" style="left:16px;top:537px;width:833px;height:34px;background:#ffffff"></div>
<div class="b" style="left:16px;top:571px;width:833px;height:1px;background:#eeeeee"></div>
<div class="b" style="left:41px;top:537px;width:1px;height:34px;background:#f0f0f0"></div>
<div class="b" style="left:66px;top:537px;width:1px;height:34px;background:#f0f0f0"></div>
<div class="b" style="left:191px;top:537px;width:1px;height:34px;background:#f0f0f0"></div>
<div class="b" style="left:612px;top:537px;width:1px;height:34px;background:#f0f0f0"></div>
<div class="b" style="left:637px;top:537px;width:1px;height:34px;background:#f0f0f0"></div>
<div class="b" style="left:776px;top:537px;width:1px;height:34px;background:#f0f0f0"></div>
<svg style="left:17px;top:542px" width="19" height="22" viewBox="17 542 19 22"><g transform="translate(0 140)"><path d="M19.0 420.4 C18.6 416.2 20.8 413.8 23.6 413.2 L30.0 413.2 C33.0 414.0 34.4 417.0 33.9 421.6 C31 423.3 23 423.5 19.4 421.9 Z" fill="url(#gShirt)"/><path d="M21.7 415.0 L23.5 413.6 L24.0 416.4 C25.4 417.8 27.6 417.6 28.6 415.8 L29.5 413.5 L31.1 414.7 L29.9 422.7 C27 423.4 24 423.2 21.8 422.3 Z" fill="url(#gApron)"/><path d="M24.0 414.0 C25 416.6 27.8 416.6 28.8 413.8 L27.6 413.2 L25 413.2 Z" fill="#eef2f6"/><ellipse cx="26.0" cy="412.0" rx="3.4" ry="3.5" fill="#e6b878"/><path d="M28.4 409.6 C30.2 410.4 30.2 413.2 29.0 414.6 C29.4 412.8 29.0 411.2 28.0 410.2 Z" fill="#8a5a22"/><path d="M22.6 410.2 C23.6 411.4 28.4 411.4 29.6 410.0 L29.6 409 L22.6 409 Z" fill="#9a6a2a"/><path d="M24.4 413.6 C25.2 414.2 26.6 414.2 27.4 413.6" stroke="#a8703a" stroke-width="0.6" fill="none"/><path d="M19.6 409.4 C19.2 405.0 22.0 402.8 25.4 402.8 C29.0 402.8 31.6 405.0 31.4 408.8 C28.4 410.8 22.8 411.0 19.6 409.4 Z" fill="url(#gHat)" stroke="#a8860e" stroke-width="0.4"/><path d="M19.0 409.2 C21.6 411.4 27.4 411.6 31.4 409.6 L31.6 408.4 C27.6 410.2 22.2 410.0 19.2 408.2 Z" fill="#d4b018"/></g></svg><svg style="left:42px;top:544px" width="20" height="19" viewBox="42 544 20 19"><g transform="translate(0 140)"><rect x="43.6" y="405.4" width="17.4" height="15.6" fill="url(#gCell)"/><rect x="43" y="404.8" width="18" height="3.6" fill="#2fa82a"/><rect x="44.4" y="405.6" width="16.6" height="1.8" fill="#5ed040"/><rect x="43" y="404.8" width="1.5" height="16.8" fill="#187c1e"/><rect x="54.4" y="404.8" width="1.5" height="16.8" fill="#1f8428"/><rect x="43" y="412.4" width="18" height="1.5" fill="#1f8428"/><rect x="43" y="420.1" width="18" height="1.5" fill="#187c1e"/></g></svg><svg style="left:612px;top:542px" width="23" height="22" viewBox="612 542 23 22"><g transform="translate(0 140)"><path d="M618 411 V412.6 H628.8 V411 M623 412.6 V415" fill="none" stroke="#6a6a6a" stroke-width="0.9"/><path d="M617.40 402.90 L621.30 405.15 L621.30 409.65 L617.40 411.90 L613.50 409.65 L613.50 405.15 Z" fill="url(#gBlueC)"/><path d="M617.40 402.90 L621.30 405.15 L617.40 407.40 L613.50 405.15 Z" fill="#6aa8ff"/><path d="M621.30 405.15 L621.30 409.65 L617.40 411.90 L617.40 407.40 Z" fill="#1a56d8"/><path d="M628.80 402.90 L632.70 405.15 L632.70 409.65 L628.80 411.90 L624.90 409.65 L624.90 405.15 Z" fill="url(#gGreenC)"/><path d="M628.80 402.90 L632.70 405.15 L628.80 407.40 L624.90 405.15 Z" fill="#9ae848"/><path d="M632.70 405.15 L632.70 409.65 L628.80 411.90 L628.80 407.40 Z" fill="#2aa010"/><path d="M623.00 413.90 L626.90 416.15 L626.90 420.65 L623.00 422.90 L619.10 420.65 L619.10 416.15 Z" fill="url(#gOrangeC)"/><path d="M623.00 413.90 L626.90 416.15 L623.00 418.40 L619.10 416.15 Z" fill="#ffd040"/><path d="M626.90 416.15 L626.90 420.65 L623.00 422.90 L623.00 418.40 Z" fill="#ff8800"/></g></svg>
<div class="b" style="left:16px;top:572px;width:833px;height:34px;background:#f8f8f8"></div>
<div class="b" style="left:16px;top:606px;width:833px;height:1px;background:#eeeeee"></div>
<div class="b" style="left:41px;top:572px;width:1px;height:34px;background:#f0f0f0"></div>
<div class="b" style="left:66px;top:572px;width:1px;height:34px;background:#f0f0f0"></div>
<div class="b" style="left:191px;top:572px;width:1px;height:34px;background:#f0f0f0"></div>
<div class="b" style="left:612px;top:572px;width:1px;height:34px;background:#f0f0f0"></div>
<div class="b" style="left:637px;top:572px;width:1px;height:34px;background:#f0f0f0"></div>
<div class="b" style="left:776px;top:572px;width:1px;height:34px;background:#f0f0f0"></div>
<svg style="left:17px;top:577px" width="19" height="22" viewBox="17 577 19 22"><g transform="translate(0 175)"><path d="M19.0 420.4 C18.6 416.2 20.8 413.8 23.6 413.2 L30.0 413.2 C33.0 414.0 34.4 417.0 33.9 421.6 C31 423.3 23 423.5 19.4 421.9 Z" fill="url(#gShirt)"/><path d="M21.7 415.0 L23.5 413.6 L24.0 416.4 C25.4 417.8 27.6 417.6 28.6 415.8 L29.5 413.5 L31.1 414.7 L29.9 422.7 C27 423.4 24 423.2 21.8 422.3 Z" fill="url(#gApron)"/><path d="M24.0 414.0 C25 416.6 27.8 416.6 28.8 413.8 L27.6 413.2 L25 413.2 Z" fill="#eef2f6"/><ellipse cx="26.0" cy="412.0" rx="3.4" ry="3.5" fill="#e6b878"/><path d="M28.4 409.6 C30.2 410.4 30.2 413.2 29.0 414.6 C29.4 412.8 29.0 411.2 28.0 410.2 Z" fill="#8a5a22"/><path d="M22.6 410.2 C23.6 411.4 28.4 411.4 29.6 410.0 L29.6 409 L22.6 409 Z" fill="#9a6a2a"/><path d="M24.4 413.6 C25.2 414.2 26.6 414.2 27.4 413.6" stroke="#a8703a" stroke-width="0.6" fill="none"/><path d="M19.6 409.4 C19.2 405.0 22.0 402.8 25.4 402.8 C29.0 402.8 31.6 405.0 31.4 408.8 C28.4 410.8 22.8 411.0 19.6 409.4 Z" fill="url(#gHat)" stroke="#a8860e" stroke-width="0.4"/><path d="M19.0 409.2 C21.6 411.4 27.4 411.6 31.4 409.6 L31.6 408.4 C27.6 410.2 22.2 410.0 19.2 408.2 Z" fill="#d4b018"/></g></svg><svg style="left:42px;top:579px" width="20" height="19" viewBox="42 579 20 19"><g transform="translate(0 175)"><rect x="43.6" y="405.4" width="17.4" height="15.6" fill="url(#gCell)"/><rect x="43" y="404.8" width="18" height="3.6" fill="#2fa82a"/><rect x="44.4" y="405.6" width="16.6" height="1.8" fill="#5ed040"/><rect x="43" y="404.8" width="1.5" height="16.8" fill="#187c1e"/><rect x="54.4" y="404.8" width="1.5" height="16.8" fill="#1f8428"/><rect x="43" y="412.4" width="18" height="1.5" fill="#1f8428"/><rect x="43" y="420.1" width="18" height="1.5" fill="#187c1e"/></g></svg><svg style="left:612px;top:577px" width="23" height="22" viewBox="612 577 23 22"><g transform="translate(0 175)"><path d="M618 411 V412.6 H628.8 V411 M623 412.6 V415" fill="none" stroke="#6a6a6a" stroke-width="0.9"/><path d="M617.40 402.90 L621.30 405.15 L621.30 409.65 L617.40 411.90 L613.50 409.65 L613.50 405.15 Z" fill="url(#gBlueC)"/><path d="M617.40 402.90 L621.30 405.15 L617.40 407.40 L613.50 405.15 Z" fill="#6aa8ff"/><path d="M621.30 405.15 L621.30 409.65 L617.40 411.90 L617.40 407.40 Z" fill="#1a56d8"/><path d="M628.80 402.90 L632.70 405.15 L632.70 409.65 L628.80 411.90 L624.90 409.65 L624.90 405.15 Z" fill="url(#gGreenC)"/><path d="M628.80 402.90 L632.70 405.15 L628.80 407.40 L624.90 405.15 Z" fill="#9ae848"/><path d="M632.70 405.15 L632.70 409.65 L628.80 411.90 L628.80 407.40 Z" fill="#2aa010"/><path d="M623.00 413.90 L626.90 416.15 L626.90 420.65 L623.00 422.90 L619.10 420.65 L619.10 416.15 Z" fill="url(#gOrangeC)"/><path d="M623.00 413.90 L626.90 416.15 L623.00 418.40 L619.10 416.15 Z" fill="#ffd040"/><path d="M626.90 416.15 L626.90 420.65 L623.00 422.90 L623.00 418.40 Z" fill="#ff8800"/></g></svg>
<div class="b" style="left:16px;top:607px;width:833px;height:34px;background:#ffffff"></div>
<div class="b" style="left:16px;top:641px;width:833px;height:1px;background:#eeeeee"></div>
<div class="b" style="left:41px;top:607px;width:1px;height:34px;background:#f0f0f0"></div>
<div class="b" style="left:66px;top:607px;width:1px;height:34px;background:#f0f0f0"></div>
<div class="b" style="left:191px;top:607px;width:1px;height:34px;background:#f0f0f0"></div>
<div class="b" style="left:612px;top:607px;width:1px;height:34px;background:#f0f0f0"></div>
<div class="b" style="left:637px;top:607px;width:1px;height:34px;background:#f0f0f0"></div>
<div class="b" style="left:776px;top:607px;width:1px;height:34px;background:#f0f0f0"></div>
<svg style="left:17px;top:612px" width="19" height="22" viewBox="17 612 19 22"><g transform="translate(0 210)"><path d="M19.0 420.4 C18.6 416.2 20.8 413.8 23.6 413.2 L30.0 413.2 C33.0 414.0 34.4 417.0 33.9 421.6 C31 423.3 23 423.5 19.4 421.9 Z" fill="url(#gShirt)"/><path d="M21.7 415.0 L23.5 413.6 L24.0 416.4 C25.4 417.8 27.6 417.6 28.6 415.8 L29.5 413.5 L31.1 414.7 L29.9 422.7 C27 423.4 24 423.2 21.8 422.3 Z" fill="url(#gApron)"/><path d="M24.0 414.0 C25 416.6 27.8 416.6 28.8 413.8 L27.6 413.2 L25 413.2 Z" fill="#eef2f6"/><ellipse cx="26.0" cy="412.0" rx="3.4" ry="3.5" fill="#e6b878"/><path d="M28.4 409.6 C30.2 410.4 30.2 413.2 29.0 414.6 C29.4 412.8 29.0 411.2 28.0 410.2 Z" fill="#8a5a22"/><path d="M22.6 410.2 C23.6 411.4 28.4 411.4 29.6 410.0 L29.6 409 L22.6 409 Z" fill="#9a6a2a"/><path d="M24.4 413.6 C25.2 414.2 26.6 414.2 27.4 413.6" stroke="#a8703a" stroke-width="0.6" fill="none"/><path d="M19.6 409.4 C19.2 405.0 22.0 402.8 25.4 402.8 C29.0 402.8 31.6 405.0 31.4 408.8 C28.4 410.8 22.8 411.0 19.6 409.4 Z" fill="url(#gHat)" stroke="#a8860e" stroke-width="0.4"/><path d="M19.0 409.2 C21.6 411.4 27.4 411.6 31.4 409.6 L31.6 408.4 C27.6 410.2 22.2 410.0 19.2 408.2 Z" fill="#d4b018"/></g></svg><svg style="left:42px;top:614px" width="20" height="19" viewBox="42 614 20 19"><g transform="translate(0 210)"><rect x="43.6" y="405.4" width="17.4" height="15.6" fill="url(#gCell)"/><rect x="43" y="404.8" width="18" height="3.6" fill="#2fa82a"/><rect x="44.4" y="405.6" width="16.6" height="1.8" fill="#5ed040"/><rect x="43" y="404.8" width="1.5" height="16.8" fill="#187c1e"/><rect x="54.4" y="404.8" width="1.5" height="16.8" fill="#1f8428"/><rect x="43" y="412.4" width="18" height="1.5" fill="#1f8428"/><rect x="43" y="420.1" width="18" height="1.5" fill="#187c1e"/></g></svg><svg style="left:612px;top:612px" width="23" height="22" viewBox="612 612 23 22"><g transform="translate(0 210)"><path d="M618 411 V412.6 H628.8 V411 M623 412.6 V415" fill="none" stroke="#6a6a6a" stroke-width="0.9"/><path d="M617.40 402.90 L621.30 405.15 L621.30 409.65 L617.40 411.90 L613.50 409.65 L613.50 405.15 Z" fill="url(#gBlueC)"/><path d="M617.40 402.90 L621.30 405.15 L617.40 407.40 L613.50 405.15 Z" fill="#6aa8ff"/><path d="M621.30 405.15 L621.30 409.65 L617.40 411.90 L617.40 407.40 Z" fill="#1a56d8"/><path d="M628.80 402.90 L632.70 405.15 L632.70 409.65 L628.80 411.90 L624.90 409.65 L624.90 405.15 Z" fill="url(#gGreenC)"/><path d="M628.80 402.90 L632.70 405.15 L628.80 407.40 L624.90 405.15 Z" fill="#9ae848"/><path d="M632.70 405.15 L632.70 409.65 L628.80 411.90 L628.80 407.40 Z" fill="#2aa010"/><path d="M623.00 413.90 L626.90 416.15 L626.90 420.65 L623.00 422.90 L619.10 420.65 L619.10 416.15 Z" fill="url(#gOrangeC)"/><path d="M623.00 413.90 L626.90 416.15 L623.00 418.40 L619.10 416.15 Z" fill="#ffd040"/><path d="M626.90 416.15 L626.90 420.65 L623.00 422.90 L623.00 418.40 Z" fill="#ff8800"/></g></svg>
<!-- scrollbar -->
<div class="b" style="left:850px;top:362px;width:11px;height:261px;background:#f0f0f0"></div>
<div class="b" style="left:858.5px;top:484px;width:3px;height:76px;background:#858585"></div>

<span class="t" style="left:64.14px;top:8.00px;font-size:15.4px;color:#0b2a48;font-weight:700;transform:scaleX(0.9642);">Properties </span>
<span class="t" style="left:184.80px;top:8.00px;font-size:15.4px;color:#0b2a48;font-weight:700;transform:scaleX(0.9012);">Planning </span>
<span class="t" style="left:293.09px;top:8.00px;font-size:15.4px;color:#0b2a48;font-weight:700;transform:scaleX(0.9127);">Readings </span>
<span class="t" style="left:404.00px;top:8.00px;font-size:15.4px;color:#fffbe6;font-weight:700;transform:scaleX(0.9070);">Splits </span>
<span class="t" style="left:490.08px;top:8.00px;font-size:15.4px;color:#0b2a48;font-weight:700;transform:scaleX(0.9158);">Inspection </span>
<span class="t" style="left:566.84px;top:8.00px;font-size:15.4px;color:#0b2a48;font-weight:700;transform:scaleX(0.9581);">Documents </span>
<span class="t" style="left:695.28px;top:8.00px;font-size:15.4px;color:#0b2a48;font-weight:700;transform:scaleX(0.9198);">Inspection </span>
<span class="t" style="left:771.30px;top:8.00px;font-size:15.4px;color:#0b2a48;font-weight:700;transform:scaleX(0.9365);">Summary </span>
<span class="t" style="left:79.10px;top:38.00px;font-size:19.5px;color:#f2f4f6;transform:scaleX(0.9451);">Checksheet: </span>
<span class="t" style="left:187.30px;top:38.00px;font-size:19.5px;color:#f2f4f6;transform:scaleX(1.0121);">028247 </span>
<span class="t" style="left:261.20px;top:38.00px;font-size:19.5px;color:#f2f4f6;transform:scaleX(1.0667);">- </span>
<span class="t" style="left:272.14px;top:38.00px;font-size:19.5px;color:#f2f4f6;transform:scaleX(1.0572);">platform </span>
<span class="t" style="left:351.98px;top:38.00px;font-size:19.5px;color:#f2f4f6;transform:scaleX(1.0156);">inspection </span>
<span class="t" style="left:77.30px;top:66.00px;font-size:15.3px;color:#f2f4f6;transform:scaleX(1.0132);">Asset: </span>
<span class="t" style="left:124.90px;top:66.00px;font-size:15.3px;color:#f2f4f6;">28170 </span>
<span class="t" style="left:174.60px;top:66.00px;font-size:15.3px;color:#f2f4f6;transform:scaleX(0.9600);">- </span>
<span class="t" style="left:185.20px;top:66.00px;font-size:15.3px;color:#f2f4f6;transform:scaleX(1.1063);">Corrosion </span>
<span class="t" style="left:261.85px;top:66.00px;font-size:15.3px;color:#f2f4f6;transform:scaleX(1.1527);">loop </span>
<span class="t" style="left:301.30px;top:66.00px;font-size:15.3px;color:#f2f4f6;transform:scaleX(1.0083);">2MF </span>
<span class="t" style="left:337.70px;top:66.00px;font-size:15.3px;color:#f2f4f6;transform:scaleX(0.9085);">ABC. </span>
<span class="t" style="left:375.00px;top:66.00px;font-size:15.3px;color:#f2f4f6;transform:scaleX(0.9400);">- </span>
<span class="t" style="left:782.73px;top:35.00px;font-size:12.4px;color:#f2f4f6;transform:scaleX(1.1730);">Burlington </span>
<span class="t" style="left:647.30px;top:52.00px;font-size:12.4px;color:#f2f4f6;transform:scaleX(1.1050);">0% of indicators &nbsp;have been read </span>
<span class="t" style="left:684.32px;top:70.00px;font-size:12.4px;color:#f2f4f6;transform:scaleX(1.0847);">Readings are Unprocessed </span>
<span class="t" style="left:18.30px;top:107.00px;font-size:13.8px;color:#1c1c1c;transform:scaleX(0.9708);">Checksheet grouping: </span>
<span class="t" style="left:252.70px;top:104.00px;font-size:13.8px;color:#111;transform:scaleX(0.8875);">6 </span>
<span class="t" style="left:42.60px;top:138.00px;font-size:13.8px;color:#111;transform:scaleX(0.9672);">Checksheets in this grouping </span>
<span class="t" style="left:687.40px;top:140.00px;font-size:13.4px;color:#161616;transform:scaleX(1.0189);">Configuration </span>
<span class="t" style="left:84.23px;top:190.00px;font-size:14.6px;color:#000;transform:scaleX(0.9658);">15 </span>
<span class="t" style="left:84.23px;top:217.00px;font-size:14.6px;color:#000;transform:scaleX(0.9658);">10 </span>
<span class="t" style="left:93.30px;top:242.00px;font-size:14.6px;color:#000;transform:scaleX(0.8125);">5 </span>
<span class="t" style="left:92.90px;top:268.00px;font-size:14.6px;color:#000;transform:scaleX(0.9125);">0 </span>
<span class="t" style="left:134.70px;top:277.00px;font-size:14.6px;color:#000;transform:scaleX(0.8995);">028247 </span>
<span class="t" style="left:254.90px;top:277.00px;font-size:14.6px;color:#000;transform:scaleX(0.8995);">028248 </span>
<span class="t" style="left:375.70px;top:277.00px;font-size:14.6px;color:#000;transform:scaleX(0.8995);">028249 </span>
<span class="t" style="left:495.90px;top:277.00px;font-size:14.6px;color:#000;transform:scaleX(0.9016);">028276 </span>
<span class="t" style="left:301.30px;top:298.00px;font-size:14.6px;color:#000;transform:scaleX(0.9492);">Checksheet </span>
<span class="t" style="left:576.23px;top:175.00px;font-size:14.6px;color:#000;transform:scaleX(0.5714);">1 </span>
<span class="t" style="left:575.00px;top:268.00px;font-size:14.6px;color:#000;transform:scaleX(0.9000);">0 </span>
<span class="t" style="left:695.47px;top:227.00px;font-size:14.6px;color:#000;transform:scaleX(0.9340);">Number of Readings </span>
<span class="t" style="left:695.46px;top:244.00px;font-size:14.6px;color:#000;transform:scaleX(0.9448);">Percent Complete </span>
<div class="clip" style="left:40px;top:333.00px;width:236.5px;height:17.9px"><span class="t" style="left:1.62px;top:0px;font-size:13.8px;color:#111;transform:scaleX(0.9805);">Readings on the checksheets in this grouping </span></div>
<span class="t" style="left:330.00px;top:336.00px;font-size:13.4px;color:#161616;transform:scaleX(1.0189);">Configuration </span>
<div class="clip" style="left:456px;top:331.00px;width:285.5px;height:17.9px"><span class="t" style="left:1.20px;top:0px;font-size:13.8px;color:#686868;transform:scaleX(0.9533);">Search Readings on the checksheets in this grouping </span></div>
<span class="t" style="left:75.60px;top:373.00px;font-size:13.8px;color:#161616;transform:scaleX(0.9641);">Checksheet </span>
<span class="t" style="left:199.13px;top:373.00px;font-size:13.8px;color:#161616;transform:scaleX(1.0703);">Indicator </span>
<span class="t" style="left:645.70px;top:373.00px;font-size:13.8px;color:#161616;transform:scaleX(1.0181);">Asset </span>
<div class="clip" style="left:780px;top:373.00px;width:69px;height:17.9px"><span class="t" style="left:4.40px;top:0px;font-size:13.8px;color:#161616;transform:scaleX(0.9641);">Asset Name </span></div>
<span class="t" style="left:70.20px;top:408.00px;font-size:13.8px;color:#161616;transform:scaleX(0.9598);">028276 </span>
<span class="t" style="left:193.93px;top:408.00px;font-size:13.8px;color:#161616;transform:scaleX(0.9730);">Handrail condition 4 </span>
<span class="t" style="left:642.20px;top:408.00px;font-size:13.8px;color:#161616;transform:scaleX(0.9459);">31075 </span>
<span class="t" style="left:778.53px;top:408.00px;font-size:13.8px;color:#161616;transform:scaleX(0.9730);">Handrails </span>
<span class="t" style="left:70.20px;top:443.00px;font-size:13.8px;color:#161616;transform:scaleX(0.9598);">028249 </span>
<span class="t" style="left:193.93px;top:443.00px;font-size:13.8px;color:#161616;transform:scaleX(0.9730);">Handrail condition 3 </span>
<span class="t" style="left:642.20px;top:443.00px;font-size:13.8px;color:#161616;transform:scaleX(0.9459);">31075 </span>
<span class="t" style="left:778.53px;top:443.00px;font-size:13.8px;color:#161616;transform:scaleX(0.9730);">Handrails </span>
<span class="t" style="left:70.20px;top:478.00px;font-size:13.8px;color:#161616;transform:scaleX(0.9598);">028276 </span>
<span class="t" style="left:193.93px;top:478.00px;font-size:13.8px;color:#161616;transform:scaleX(0.9730);">Handrail condition 2 </span>
<span class="t" style="left:642.20px;top:478.00px;font-size:13.8px;color:#161616;transform:scaleX(0.9459);">31075 </span>
<span class="t" style="left:778.53px;top:478.00px;font-size:13.8px;color:#161616;transform:scaleX(0.9730);">Handrails </span>
<span class="t" style="left:70.20px;top:513.00px;font-size:13.8px;color:#161616;transform:scaleX(0.9598);">028249 </span>
<span class="t" style="left:193.93px;top:513.00px;font-size:13.8px;color:#161616;transform:scaleX(0.9730);">Handrail condition 1 </span>
<span class="t" style="left:642.20px;top:513.00px;font-size:13.8px;color:#161616;transform:scaleX(0.9459);">31075 </span>
<span class="t" style="left:778.53px;top:513.00px;font-size:13.8px;color:#161616;transform:scaleX(0.9730);">Handrails </span>
<span class="t" style="left:70.20px;top:548.00px;font-size:13.8px;color:#161616;transform:scaleX(0.9598);">028249 </span>
<span class="t" style="left:194.90px;top:548.00px;font-size:13.8px;color:#161616;transform:scaleX(0.9730);">Stairs conditino 9 </span>
<span class="t" style="left:642.20px;top:548.00px;font-size:13.8px;color:#161616;transform:scaleX(0.9710);">31061 </span>
<span class="t" style="left:779.50px;top:548.00px;font-size:13.8px;color:#161616;transform:scaleX(0.9730);">Stairs </span>
<span class="t" style="left:70.20px;top:583.00px;font-size:13.8px;color:#161616;transform:scaleX(0.9598);">028248 </span>
<span class="t" style="left:194.90px;top:583.00px;font-size:13.8px;color:#161616;transform:scaleX(0.9730);">Stairs conditino 8 </span>
<span class="t" style="left:642.20px;top:583.00px;font-size:13.8px;color:#161616;transform:scaleX(0.9710);">31061 </span>
<span class="t" style="left:779.50px;top:583.00px;font-size:13.8px;color:#161616;transform:scaleX(0.9730);">Stairs </span>
<span class="t" style="left:70.20px;top:618.00px;font-size:13.8px;color:#161616;transform:scaleX(0.9598);">028276 </span>
<span class="t" style="left:194.90px;top:618.00px;font-size:13.8px;color:#161616;transform:scaleX(0.9730);">Stairs conditino 7 </span>
<span class="t" style="left:642.20px;top:618.00px;font-size:13.8px;color:#161616;transform:scaleX(0.9710);">31061 </span>
<span class="t" style="left:779.50px;top:618.00px;font-size:13.8px;color:#161616;transform:scaleX(0.9730);">Stairs </span>
</div></div>
<!-- window frame -->
<div class="b" style="left:0;top:0;width:864px;height:2px;background:#000"></div>
<div class="b" style="left:0;top:623px;width:864px;height:2px;background:#000"></div>
<div class="b" style="left:0;top:0;width:2px;height:625px;background:#000"></div>
<div class="b" style="left:862px;top:0;width:2px;height:625px;background:#000"></div>
</body>
</html>
